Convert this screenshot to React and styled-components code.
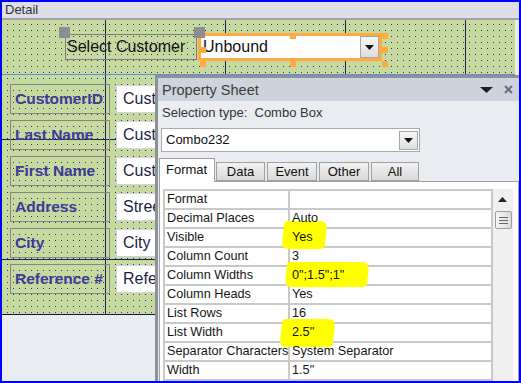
import React from "react";
import styled, { createGlobalStyle } from "styled-components";

const GlobalStyle = createGlobalStyle`
  html, body { margin: 0; padding: 0; background: #fff; }
  body { font-family: "Liberation Sans", Arial, sans-serif; }
`;

const Frame = styled.div`
  position: relative;
  width: 521px;
  height: 383px;
  box-sizing: border-box;
  border: 2px solid #0000ff;
  background: #e9ecf1;
  overflow: hidden;
  display: flex;
  flex-direction: column;
`;

const SectionBar = styled.div`
  flex: none;
  height: 16px;
  line-height: 16px;
  padding-left: 3px;
  background: #dedee8;
  border-bottom: 2px solid #a3a3aa;
  font-size: 13px;
  color: #333;
`;

const Canvas = styled.div`
  flex: none;
  width: 513px;
  height: 294px;
  display: flex;
  flex-direction: column;
  border-bottom: 1px solid #14183a;
  background-color: #c6d99e;
  background-image:
    linear-gradient(to right, #1a2058 0 1px, transparent 1px),
    linear-gradient(to bottom, #1a2058 0 1px, transparent 1px),
    conic-gradient(at 1px 1px, transparent 270deg, #22308a 270deg);
  background-size: 120px 100%, 100% 120px, 6px 6px;
  background-position: 103px 0, 0 119px, 5px 4px;
`;

const TopSection = styled.div`
  flex: none;
  height: 55px;
  box-sizing: border-box;
  border-bottom: 1px solid #5a8fe2;
  display: flex;
  align-items: flex-start;
  padding: 14px 0 0 63px;
`;

const CaptionBox = styled.div`
  position: relative;
  width: 132px;
  height: 26px;
  box-sizing: border-box;
  border: 1px solid #7c7c7c;
  padding-left: 1px;
  font-size: 16px;
  line-height: 24px;
  color: #111;
  white-space: nowrap;
`;

const MoveHandle = styled.span`
  position: absolute;
  left: ${(p) => p.$left}px;
  top: ${(p) => p.$top}px;
  width: 11px;
  height: 11px;
  background: #8b8d92;
  z-index: 2;
`;

const ComboFrame = styled.div`
  position: relative;
  margin: -1px 0 0 1px;
  width: 184px;
  height: 28px;
  box-sizing: border-box;
  border: 3px solid #ffaa40;
  background: #fff;
  display: flex;
  align-items: stretch;
`;

const ComboText = styled.div`
  flex: 1;
  padding-left: 2px;
  font-size: 16px;
  line-height: 22px;
  color: #111;
`;

const DropButton = styled.div`
  width: ${(p) => p.$w || 18}px;
  margin: ${(p) => p.$m || "0"};
  box-sizing: border-box;
  border: 1px solid #a7a7a7;
  background: linear-gradient(#f6f6f6, #dedede);
  display: flex;
  align-items: center;
  justify-content: center;
`;

const SizeHandle = styled.span`
  position: absolute;
  left: ${(p) => p.$left}px;
  top: ${(p) => p.$top}px;
  width: 6px;
  height: 6px;
  background: #ffaa40;
`;

const FieldList = styled.div`
  display: flex;
  flex-direction: column;
  gap: 6px;
  padding: 9px 0 0 8px;
`;

const FieldRow = styled.div`
  display: flex;
  align-items: center;
`;

const FieldLabel = styled.div`
  width: 100px;
  height: 30px;
  box-sizing: border-box;
  border: 1px solid #858585;
  padding-left: 4px;
  font-size: 15.5px;
  font-weight: bold;
  line-height: 28px;
  color: #3b3b98;
  white-space: nowrap;
`;

const FieldBox = styled.div`
  margin-left: 6px;
  width: 140px;
  height: 28px;
  box-sizing: border-box;
  border: 1px solid #d4d4d4;
  background: #fff;
  padding-left: 6px;
  font-size: 16px;
  line-height: 26px;
  color: #1d1f48;
  white-space: nowrap;
  overflow: hidden;
`;

const Panel = styled.div`
  position: absolute;
  left: 153px;
  top: 73px;
  width: 363px;
  bottom: 0;
  z-index: 3;
  border-left: 3px solid #8d9095;
  border-top: 3px solid #8d9095;
  background: #e9ecf1;
  display: flex;
  flex-direction: column;
`;

const TitleBar = styled.div`
  flex: none;
  height: 23px;
  display: flex;
  align-items: center;
  padding: 0 8px 0 4px;
  background: #cdd4dd;
  font-size: 14.5px;
  color: #3c3c3c;
`;

const TitleText = styled.span`
  flex: 1;
`;

const TitleIcons = styled.div`
  display: flex;
  align-items: center;
  gap: 11px;
`;

const SelectionLine = styled.div`
  height: 24px;
  line-height: 24px;
  padding-left: 4px;
  font-size: 13px;
  color: #333;
`;

const ObjectCombo = styled.div`
  margin: 3px 0 0 3px;
  width: 259px;
  height: 24px;
  box-sizing: border-box;
  border: 1px solid #a9a9a9;
  background: #fff;
  display: flex;
`;

const ObjectName = styled.div`
  flex: 1;
  padding-left: 4px;
  font-size: 13px;
  line-height: 22px;
  color: #111;
`;

const TabRow = styled.div`
  margin-top: 6px;
  height: 23px;
  padding-left: 1px;
  display: flex;
  align-items: flex-end;
  gap: 2px;
`;

const Tab = styled.div`
  position: relative;
  box-sizing: border-box;
  width: ${(p) => p.$w}px;
  height: ${(p) => (p.$active ? 24 : 19)}px;
  margin-bottom: ${(p) => (p.$active ? -1 : 0)}px;
  margin-right: ${(p) => (p.$active ? -1 : 0)}px;
  z-index: ${(p) => (p.$active ? 1 : 0)};
  border: 1px solid #a0a0a0;
  border-bottom: ${(p) => (p.$active ? "none" : "1px solid #a0a0a0")};
  background: ${(p) => (p.$active ? "#fff" : "linear-gradient(#f3f3f3, #d9d9d9)")};
  font-size: 13px;
  line-height: ${(p) => (p.$active ? 21 : 18)}px;
  text-align: ${(p) => (p.$active ? "left" : "center")};
  padding-left: ${(p) => (p.$active ? 6 : 0)}px;
  color: #111;
`;

const TabPage = styled.div`
  flex: 1;
  margin: 0 2px 0 1px;
  border: 1px solid #a0a0a0;
  border-bottom: none;
  background: #fff;
  display: flex;
  align-items: flex-start;
  padding: 7px 0 0 3px;
`;

const PropGrid = styled.div`
  width: 330px;
  box-sizing: border-box;
  display: grid;
  grid-template-columns: 123px 1fr;
  gap: 2px;
  padding: 2px;
  background: #c9c9c9;
`;

const PropCell = styled.div`
  height: 17px;
  background: #fff;
  padding-left: 2px;
  font-size: 12.7px;
  line-height: 17px;
  color: #151515;
  white-space: nowrap;
  position: relative;
`;

const ValueText = styled.span`
  position: relative;
  z-index: 2;
`;

const Marker = styled.span`
  position: absolute;
  z-index: 1;
  left: ${(p) => p.$left}px;
  top: ${(p) => p.$top}px;
  width: ${(p) => p.$w}px;
  height: ${(p) => p.$h}px;
  background: #ffff00;
  border-radius: 3px 7px 4px 6px;
  transform: skewX(-6deg);
  filter: blur(0.4px);
`;

const ScrollTrack = styled.div`
  position: relative;
  width: 20px;
  align-self: stretch;
  background: #f0f0f0;
`;

const ScrollArrow = styled.svg`
  position: absolute;
  left: 5px;
  top: 8px;
`;

const ScrollThumb = styled.div`
  position: absolute;
  left: 2px;
  top: 22px;
  width: 17px;
  height: 18px;
  box-sizing: border-box;
  border: 1px solid #9c9c9c;
  border-radius: 2px;
  background: linear-gradient(to right, #f7f7f7, #dcdcdc);
  display: flex;
  flex-direction: column;
  align-items: center;
  justify-content: center;
  gap: 2px;
`;

const GripLine = styled.span`
  width: 9px;
  height: 1px;
  background: #666;
`;

const DownTriangle = ({ w = 7, h = 4, color = "#111" }) => (
  <svg width={w} height={h} viewBox={`0 0 ${w} ${h}`}>
    <polygon points={`0,0 ${w},0 ${w / 2},${h}`} fill={color} />
  </svg>
);

const fields = [
  ["CustomerID", "CustomerID"],
  ["Last Name", "CustomerLast"],
  ["First Name", "CustomerFirst"],
  ["Address", "Street"],
  ["City", "City"],
  ["Reference #", "Reference"],
];

const properties = [
  ["Format", ""],
  ["Decimal Places", "Auto"],
  ["Visible", "Yes", { left: -7, top: -8, w: 43, h: 28 }],
  ["Column Count", "3"],
  ["Column Widths", '0";1.5";1"', { left: -4, top: -5, w: 82, h: 25 }],
  ["Column Heads", "Yes"],
  ["List Rows", "16"],
  ["List Width", '2.5"', { left: -9, top: -5, w: 53, h: 28 }],
  ["Separator Characters", "System Separator"],
  ["Width", '1.5"'],
];

const tabs = [
  ["Format", 56, true],
  ["Data", 49],
  ["Event", 50],
  ["Other", 50],
  ["All", 48],
];

const sizeHandles = [
  [89, -3], [181, -3], [-1, 11], [181, 11], [-1, 25], [89, 25], [181, 25],
];

export default function App() {
  return (
    <>
      <GlobalStyle />
      <Frame>
        <SectionBar>Detail</SectionBar>
        <Canvas>
          <TopSection>
            <CaptionBox>
              <MoveHandle $left={-7} $top={-8} />
              Select Customer
            </CaptionBox>
            <ComboFrame>
              {sizeHandles.map(([l, t]) => (
                <SizeHandle key={`${l}-${t}`} $left={l} $top={t} />
              ))}
              <MoveHandle $left={-7} $top={-9} />
              <ComboText>Unbound</ComboText>
              <DropButton $w={19}>
                <DownTriangle w={9} h={5} />
              </DropButton>
            </ComboFrame>
          </TopSection>
          <FieldList>
            {fields.map(([label, value]) => (
              <FieldRow key={label}>
                <FieldLabel>{label}</FieldLabel>
                <FieldBox>{value}</FieldBox>
              </FieldRow>
            ))}
          </FieldList>
        </Canvas>

        <Panel>
          <TitleBar>
            <TitleText>Property Sheet</TitleText>
            <TitleIcons>
              <DownTriangle w={13} h={6} color="#1e1e1e" />
              <svg width="9" height="9" viewBox="0 0 9 9">
                <path d="M1 1 L8 8 M8 1 L1 8" stroke="#6e6e6e" strokeWidth="2" />
              </svg>
            </TitleIcons>
          </TitleBar>
          <SelectionLine>Selection type:&nbsp; Combo Box</SelectionLine>
          <ObjectCombo>
            <ObjectName>Combo232</ObjectName>
            <DropButton $w={19} $m="2px 1px 1px 0">
              <DownTriangle w={9} h={5} />
            </DropButton>
          </ObjectCombo>
          <TabRow>
            {tabs.map(([name, w, active]) => (
              <Tab key={name} $w={w} $active={active}>
                {name}
              </Tab>
            ))}
          </TabRow>
          <TabPage>
            <PropGrid>
              {properties.map(([name, value, mark]) => (
                <React.Fragment key={name}>
                  <PropCell>{name}</PropCell>
                  <PropCell>
                    {mark && (
                      <Marker $left={mark.left} $top={mark.top} $w={mark.w} $h={mark.h} />
                    )}
                    <ValueText>{value}</ValueText>
                  </PropCell>
                </React.Fragment>
              ))}
            </PropGrid>
            <ScrollTrack>
              <ScrollArrow width="9" height="5" viewBox="0 0 9 5">
                <polygon points="0,5 9,5 4.5,0" fill="#222" />
              </ScrollArrow>
              <ScrollThumb>
                <GripLine />
                <GripLine />
                <GripLine />
              </ScrollThumb>
            </ScrollTrack>
          </TabPage>
        </Panel>
      </Frame>
    </>
  );
}
